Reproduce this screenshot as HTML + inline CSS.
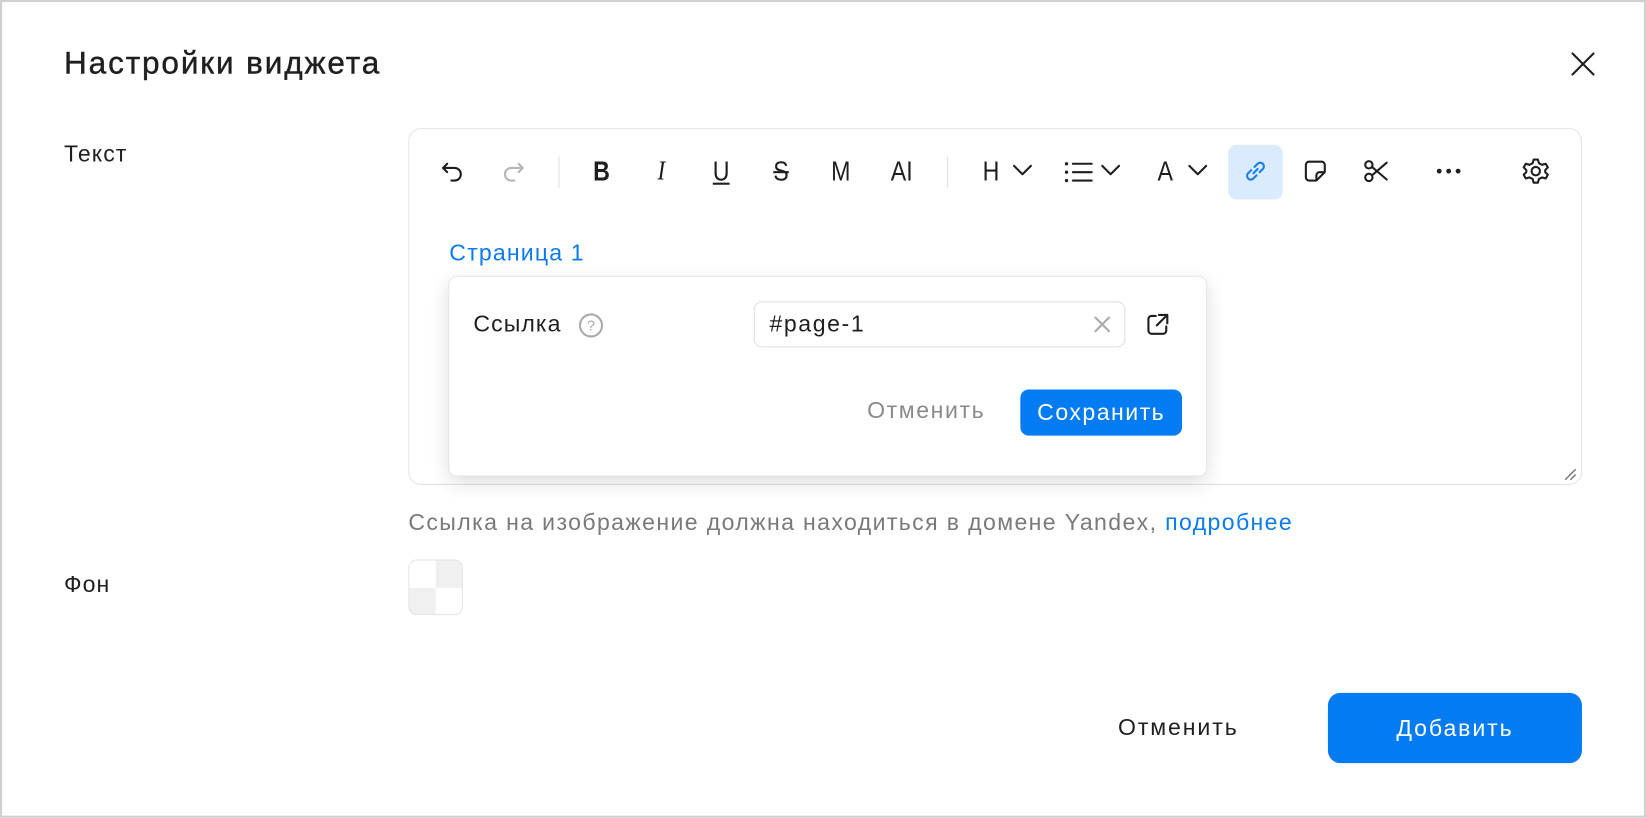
<!DOCTYPE html>
<html><head><meta charset="utf-8"><style>
html,body{margin:0;padding:0;background:#fff;width:1646px;height:818px;overflow:hidden}
#w{position:absolute;left:0;top:0;width:1568px;height:779px;transform:scale(1.04974);transform-origin:0 0;font-family:"Liberation Sans","DejaVu Sans",sans-serif;color:#1f1f1f}
.a{position:absolute;white-space:nowrap}
#frame{left:0;top:0;width:1564px;height:775px;border:2px solid #d0d0d0}
.t{font-size:22px;line-height:24px;letter-spacing:1px}
svg{position:absolute;overflow:visible}
.ic{stroke:#1f1f1f;stroke-width:2;fill:none;stroke-linecap:round;stroke-linejoin:round}
.tb{position:absolute;top:148px;font-size:26px;line-height:30px;text-align:center;width:30px;transform:scaleX(0.85)}
</style></head><body><div id="w">
<div class="a" id="frame"></div>
<div class="a" style="left:61px;top:43px;font-size:30px;line-height:36px;letter-spacing:1.8px;-webkit-text-stroke:0.4px #1f1f1f">Настройки виджета</div>
<svg style="left:1496px;top:49px" width="24" height="24"><path class="ic" stroke-width="2.4" d="M2 2L22 22M22 2L2 22"/></svg>
<div class="a t" style="left:61px;top:135px">Текст</div>
<div class="a" style="left:389px;top:122px;width:1116px;height:338px;border:1px solid #e3e3e3;border-radius:12px"></div>
<svg style="left:420px;top:151px" width="24" height="24"><path class="ic" d="M6 5L2 9L6 13M2 9H13A6 6 0 0 1 13 21H10"/></svg>
<svg style="left:476px;top:151px" width="24" height="24"><path class="ic" style="stroke:#b5b5b5" d="M18 5L22 9L18 13M22 9H11A6 6 0 0 0 11 21H14"/></svg>
<div class="a" style="left:532px;top:149px;width:1px;height:30px;background:#e0e0e0"></div>
<div class="tb" style="left:558px;font-weight:bold">B</div>
<div class="tb" style="left:615px;font-style:italic;font-family:'Liberation Serif',serif">I</div>
<div class="tb" style="left:672px;text-decoration:underline">U</div>
<div class="tb" style="left:729px;text-decoration:line-through">S</div>
<div class="tb" style="left:786px">M</div>
<div class="tb" style="left:844px">AI</div>
<div class="a" style="left:902px;top:149px;width:1px;height:30px;background:#e0e0e0"></div>
<div class="tb" style="left:929px">H</div>
<svg style="left:964px;top:156px" width="20" height="12"><path class="ic" d="M2 2L10 10L18 2"/></svg>
<svg style="left:1014px;top:153px" width="28" height="22"><path class="ic" d="M8 3H26M8 11H26M8 19H26"/><circle cx="2" cy="3" r="1.6" fill="#1f1f1f"/><circle cx="2" cy="11" r="1.6" fill="#1f1f1f"/><circle cx="2" cy="19" r="1.6" fill="#1f1f1f"/></svg>
<svg style="left:1048px;top:156px" width="20" height="12"><path class="ic" d="M2 2L10 10L18 2"/></svg>
<div class="tb" style="left:1095px">A</div>
<svg style="left:1131px;top:156px" width="20" height="12"><path class="ic" d="M2 2L10 10L18 2"/></svg>
<div class="a" style="left:1170px;top:138px;width:52px;height:52px;border-radius:8px;background:#d9ebfd"></div>
<svg style="left:1184px;top:151px" width="24" height="24"><path class="ic" style="stroke:#1a7ef0" d="M10 14L14 10M8 11L5 14A3.5 3.5 0 0 0 10 19L13 16M11 8L14 5A3.5 3.5 0 0 1 19 10L16 13"/></svg>
<svg style="left:1241px;top:151px" width="24" height="24"><path class="ic" d="M21 13V6A3 3 0 0 0 18 3H6A3 3 0 0 0 3 6V18A3 3 0 0 0 6 21H13L21 13ZM13 21V16A3 3 0 0 1 16 13H21"/></svg>
<svg style="left:1299px;top:151px" width="24" height="24"><circle class="ic" cx="5" cy="6" r="3.5"/><circle class="ic" cx="5" cy="18" r="3.5"/><path class="ic" d="M8 8L22 20M8 16L22 4"/></svg>
<svg style="left:1368px;top:160px" width="26" height="6"><circle cx="3" cy="3" r="2.3" fill="#1f1f1f"/><circle cx="12" cy="3" r="2.3" fill="#1f1f1f"/><circle cx="21" cy="3" r="2.3" fill="#1f1f1f"/></svg>
<svg style="left:1450px;top:150px" width="26" height="26"><circle class="ic" cx="13" cy="13" r="4"/><path class="ic" d="M11 2H15L16 5.5L19 7L22.5 6L24.5 9.5L22 12V14L24.5 16.5L22.5 20L19 19L16 20.5L15 24H11L10 20.5L7 19L3.5 20L1.5 16.5L4 14V12L1.5 9.5L3.5 6L7 7L10 5.5Z"/></svg>
<div class="a" style="left:428px;top:229px;font-size:22px;line-height:24px;letter-spacing:1.1px;color:#0b7bef">Страница 1</div>
<div class="a" style="left:427px;top:263px;width:721px;height:189px;background:#fff;border:1px solid #e6e6e6;border-radius:8px;box-shadow:0 6px 18px rgba(0,0,0,.13)"></div>
<div class="a" style="left:451px;top:297px;font-size:22px;line-height:24px;letter-spacing:1px">Ссылка</div>
<svg style="left:551px;top:298px" width="24" height="24"><circle cx="12" cy="12" r="10.5" fill="none" stroke="#aaa" stroke-width="2"/><text x="12" y="17" text-anchor="middle" font-size="14" fill="#aaa" font-family="Liberation Sans">?</text></svg>
<div class="a" style="left:718px;top:287px;width:352px;height:42px;border:1px solid #e0e0e0;border-radius:8px"></div>
<div class="a" style="left:733px;top:297px;font-size:22px;line-height:24px;letter-spacing:1.5px">#page-1</div>
<svg style="left:1042px;top:301px" width="16" height="16"><path stroke="#aaa" stroke-width="2" fill="none" d="M1 1L15 15M15 1L1 15"/></svg>
<svg style="left:1091px;top:297px" width="24" height="24"><path class="ic" d="M10 4H6A3 3 0 0 0 3 7V18A3 3 0 0 0 6 21H17A3 3 0 0 0 20 18V14M13 3H21V11M21 3L11 13"/></svg>
<div class="a" style="left:826px;top:379px;font-size:22px;line-height:24px;letter-spacing:1.5px;color:#8a8a8a">Отменить</div>
<div class="a" style="left:972px;top:371px;width:154px;height:44px;border-radius:8px;background:#027bf3;color:#fff;font-size:22px;letter-spacing:1.4px;line-height:44px;text-align:center">Сохранить</div>
<svg style="left:1490px;top:446px" width="12" height="12"><path stroke="#777" stroke-width="1.4" d="M1 11L11 1M6 11L11 6"/></svg>
<div class="a" style="left:389px;top:486px;color:#7a7a7a;font-size:22px;line-height:24px;letter-spacing:1.3px">Ссылка на изображение должна находиться в домене Yandex, <span style="color:#0b7bef">подробнее</span></div>
<div class="a t" style="left:61px;top:545px">Фон</div>
<div class="a" style="left:389px;top:533px;width:50px;height:51px;border:1px solid #e3e3e3;border-radius:8px;overflow:hidden;background:linear-gradient(#f0f0f0,#f0f0f0) 25px 0/25px 26px no-repeat,linear-gradient(#f0f0f0,#f0f0f0) 0 26px/25px 26px no-repeat,#fff"></div>
<div class="a" style="left:1065px;top:681px;font-size:22px;line-height:24px;letter-spacing:1.8px">Отменить</div>
<div class="a" style="left:1265px;top:660px;width:242px;height:67px;border-radius:12px;background:#027bf3;color:#fff;font-size:22px;letter-spacing:1.8px;line-height:67px;text-align:center">Добавить</div>
</div></body></html>
